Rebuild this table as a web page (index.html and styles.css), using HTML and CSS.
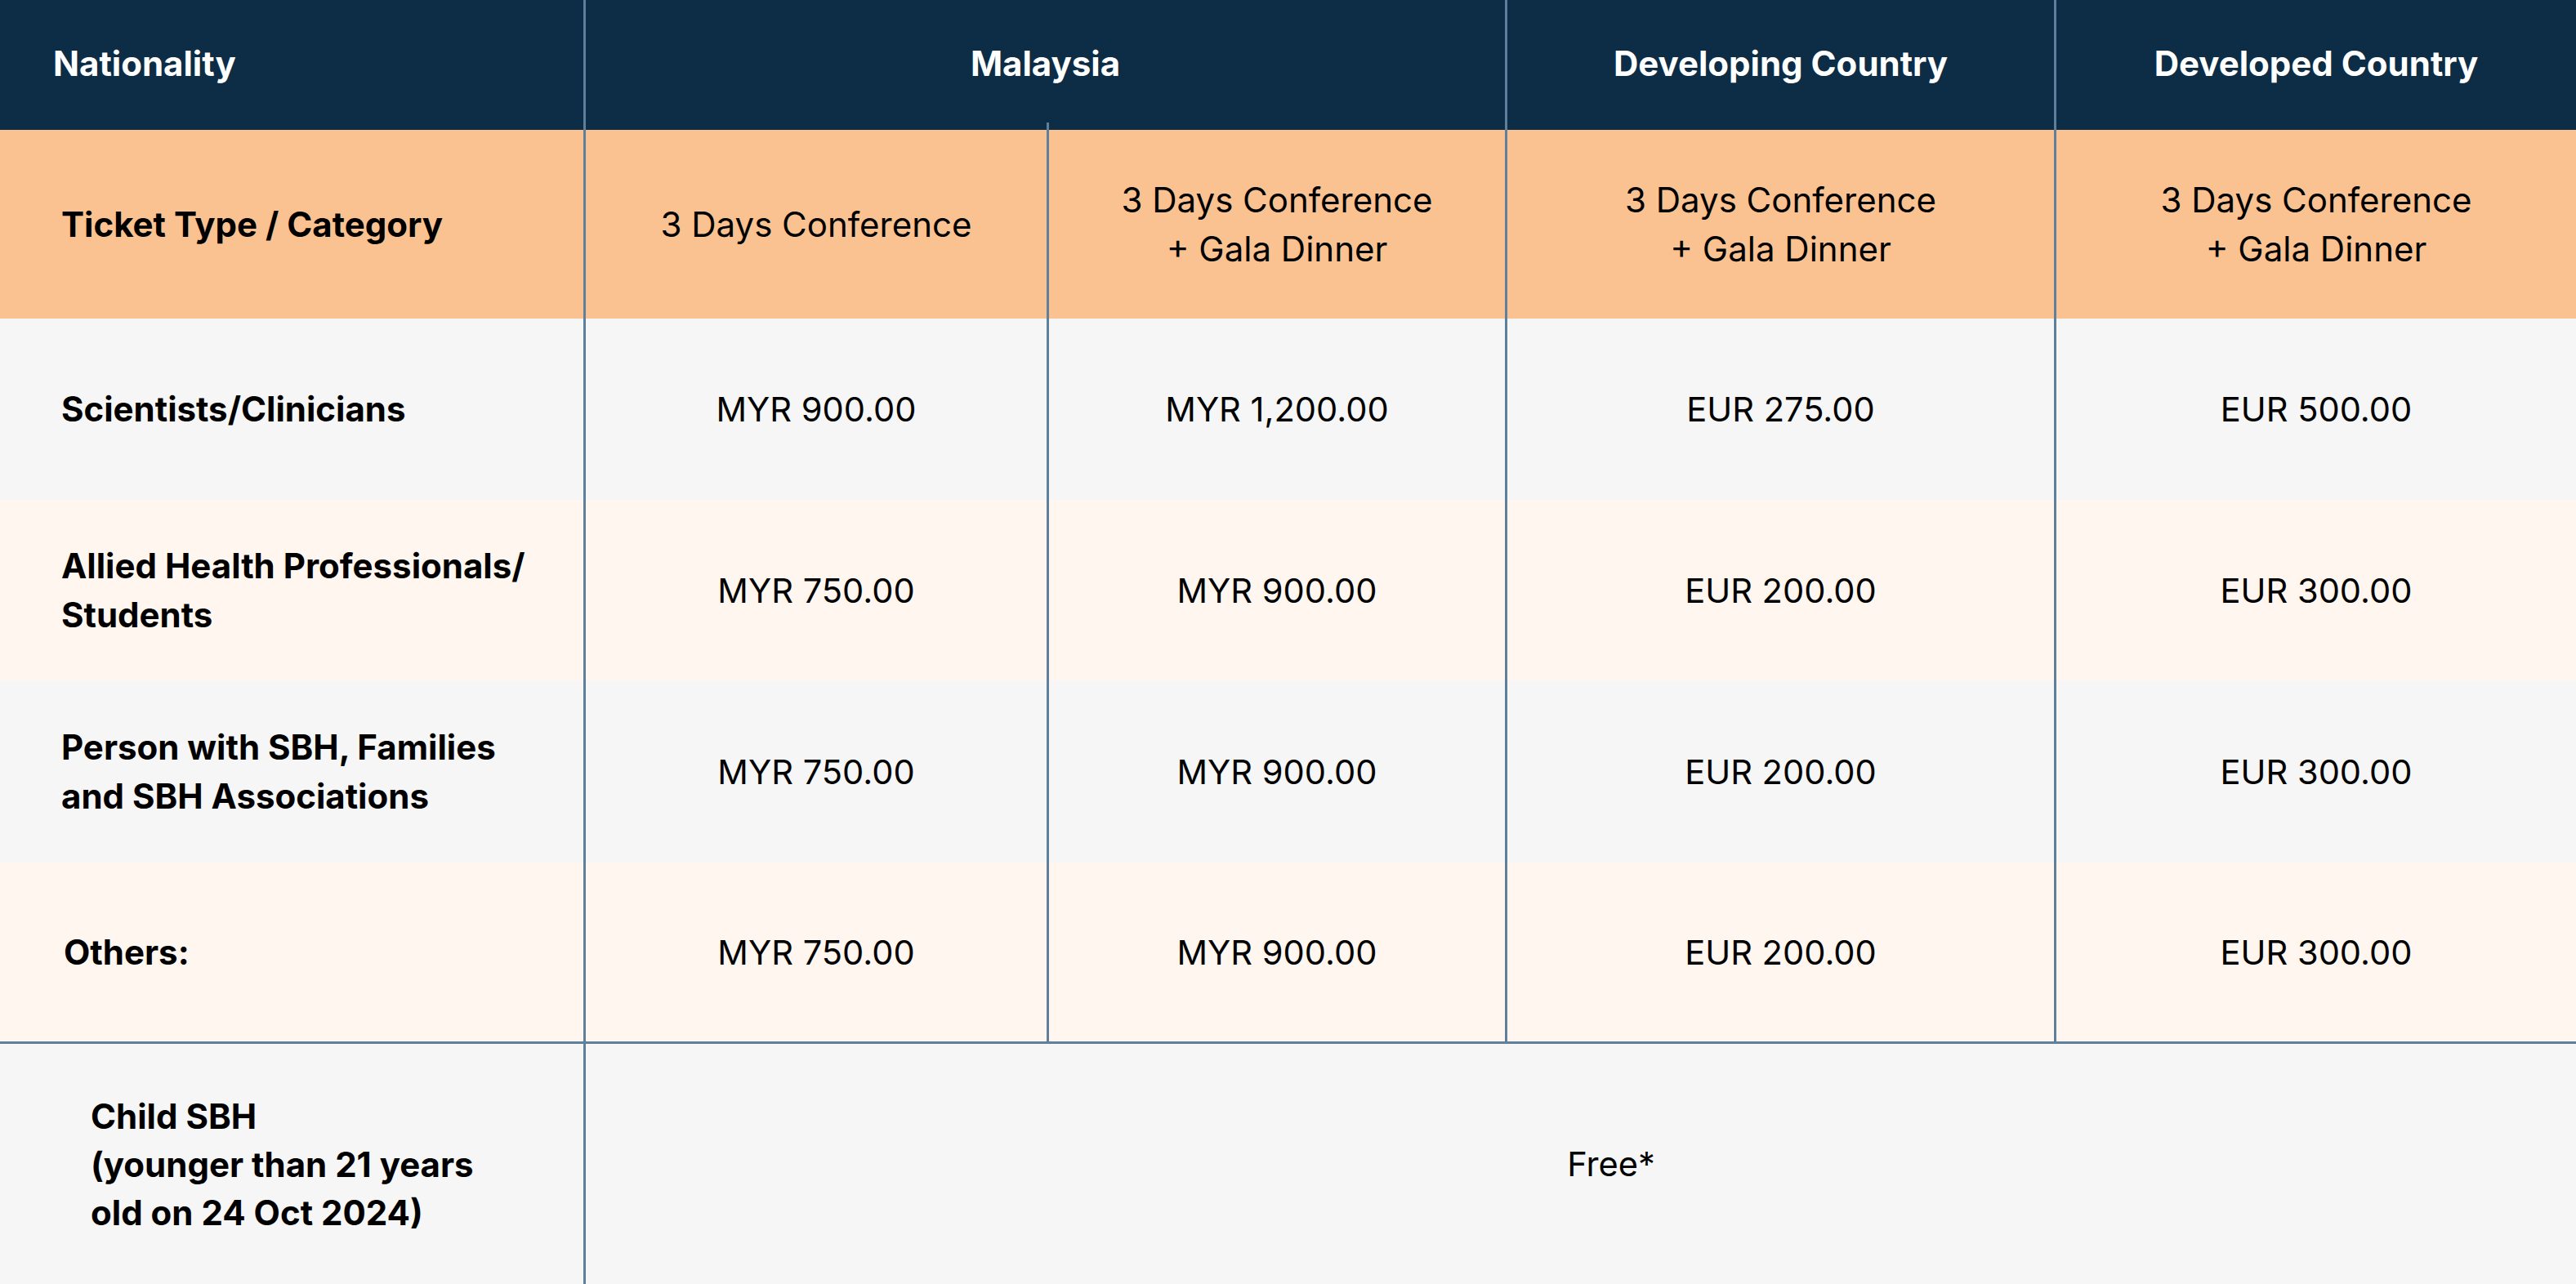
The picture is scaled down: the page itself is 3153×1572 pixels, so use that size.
FILE: index.html
```html
<!DOCTYPE html>
<html lang="en">
<head>
<meta charset="utf-8">
<title>Registration Fees</title>
<link rel="stylesheet" href="styles.css">
</head>
<body>
<div class="fees">
  <div class="cell head label-head">Nationality</div>
  <div class="cell head span2 lined">Malaysia</div>
  <div class="cell head lined">Developing Country</div>
  <div class="cell head lined">Developed Country</div>

  <div class="cell cat label-cat">Ticket Type / Category</div>
  <div class="cell cat lined">3 Days Conference</div>
  <div class="cell cat lined sub">3 Days Conference<br>+ Gala Dinner</div>
  <div class="cell cat lined">3 Days Conference<br>+ Gala Dinner</div>
  <div class="cell cat lined">3 Days Conference<br>+ Gala Dinner</div>

  <div class="cell r1 gray label">Scientists/Clinicians</div>
  <div class="cell r1 gray lined val">MYR 900.00</div>
  <div class="cell r1 gray lined val">MYR 1,200.00</div>
  <div class="cell r1 gray lined val">EUR 275.00</div>
  <div class="cell r1 gray lined val">EUR 500.00</div>

  <div class="cell r2 cream label">Allied Health Professionals/<br>Students</div>
  <div class="cell r2 cream lined val">MYR 750.00</div>
  <div class="cell r2 cream lined val">MYR 900.00</div>
  <div class="cell r2 cream lined val">EUR 200.00</div>
  <div class="cell r2 cream lined val">EUR 300.00</div>

  <div class="cell r3 gray label">Person with SBH, Families<br>and SBH Associations</div>
  <div class="cell r3 gray lined val">MYR 750.00</div>
  <div class="cell r3 gray lined val">MYR 900.00</div>
  <div class="cell r3 gray lined val">EUR 200.00</div>
  <div class="cell r3 gray lined val">EUR 300.00</div>

  <div class="cell r4 cream label label-others">Others:</div>
  <div class="cell r4 cream lined val">MYR 750.00</div>
  <div class="cell r4 cream lined val">MYR 900.00</div>
  <div class="cell r4 cream lined val">EUR 200.00</div>
  <div class="cell r4 cream lined val">EUR 300.00</div>

  <div class="cell child gray label label-child">Child SBH<br>(younger than 21 years<br>old on 24 Oct 2024)</div>
  <div class="cell child gray lined val span4 free">Free*</div>
</div>
</body>
</html>
```
FILE: styles.css
```css
html, body {
  margin: 0;
  padding: 0;
  background: #f6f6f6;
}

body {
  font-family: Inter, "Noto Sans", "Liberation Sans", sans-serif;
  color: #000;
  overflow: hidden;
}

.fees {
  display: grid;
  grid-template-columns: 714px 567px 561px 672px 639px;
  grid-template-rows: 159px 231px 222px 221px 223px 219px 297px;
  width: 3153px;
}

.cell {
  box-sizing: border-box;
  display: flex;
  align-items: center;
  justify-content: center;
  text-align: center;
  font-size: 41.6px;
  line-height: 60px;
}

.lined {
  border-left: 3px solid #5f809d;
}

.span2 { grid-column: span 2; }
.span4 { grid-column: span 4; }

.head {
  background: #0c2d45;
  color: #fff;
  font-weight: 700;
  font-size: 42px;
  padding-bottom: 3px;
}

.label-head {
  justify-content: flex-start;
  padding-left: 65px;
}

.cat {
  background: #fbc291;
}

.cat.lined {
  font-size: 42px;
}

.label-cat {
  justify-content: flex-start;
  text-align: left;
  padding-left: 75px;
  font-weight: 700;
  font-size: 42px;
}

.sub {
  position: relative;
}

.sub::before {
  content: "";
  position: absolute;
  left: -3px;
  top: -9px;
  width: 3px;
  height: 9px;
  background: #5f809d;
}

.gray { background: #f6f6f6; }
.cream { background: #fff6f0; }

.label {
  justify-content: flex-start;
  text-align: left;
  padding-left: 75px;
  font-weight: 700;
  font-size: 42px;
}

.label-others {
  padding-left: 78px;
}

.child {
  border-top: 3px solid #5f809d;
}

.label-child {
  padding-left: 111px;
  line-height: 59px;
}

.free {
  padding-left: 74px;
}
```
